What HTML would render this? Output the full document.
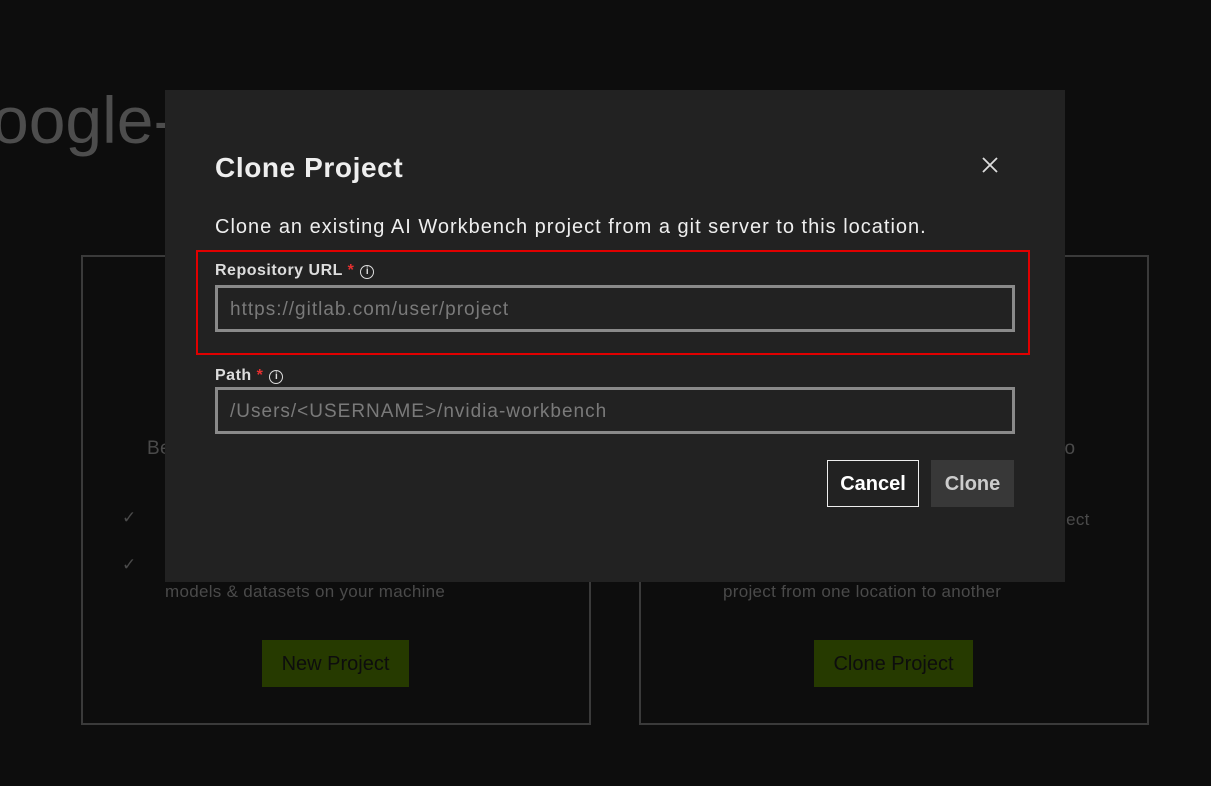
<!DOCTYPE html>
<html><head><style>
*{margin:0;padding:0;box-sizing:border-box}
body{width:1211px;height:786px;background:#0d0d0d;font-family:"Liberation Sans",sans-serif;position:relative;overflow:hidden;color:#fff}
.abs{position:absolute}
.card{position:absolute;border:2px solid #3a3a3a;top:255px;height:470px;width:510px}
.bg{color:#4a4a4a;font-size:17px;letter-spacing:0.3px}
.gbtn{position:absolute;background:#263a00;color:#0d0d0d;font-size:20px;height:47px;line-height:49px;text-align:center}
.modal{position:absolute;left:165px;top:90px;width:900px;height:492px;background:#222}
label{position:absolute;font-size:16px;font-weight:bold;color:#ddd;letter-spacing:0.5px}
.req{color:#e53030}
.inp{position:absolute;left:50px;width:800px;height:47px;border:3px solid #8a8a8a;color:#7a7a7a;font-size:19px;padding-left:12px;line-height:44px;letter-spacing:1px}
.info{display:inline-block;width:14px;height:14px;border:1.5px solid #ddd;border-radius:50%;font-size:10px;text-align:center;line-height:11px;vertical-align:1px;margin-left:6px;letter-spacing:0}
</style></head><body>
<div class="abs" style="left:-8px;top:82px;font-size:66px;color:#4d4d4d">oogle-d</div>
<div class="card" style="left:81px"></div>
<div class="card" style="left:639px"></div>
<div class="abs bg" style="left:147px;top:438px;font-size:19px">Be</div>
<div class="abs bg" style="left:1048px;top:438px;font-size:19px;z-index:0">nto</div>
<div class="abs bg" style="left:122px;top:508px">✓</div>
<div class="abs bg" style="left:122px;top:555px">✓</div>
<div class="abs bg" style="left:1062px;top:510px">ject</div>
<div class="abs bg" style="left:165px;top:582px">models &amp; datasets on your machine</div>
<div class="abs bg" style="left:723px;top:582px">project from one location to another</div>
<div class="gbtn" style="left:262px;top:640px;width:147px">New Project</div>
<div class="gbtn" style="left:814px;top:640px;width:159px">Clone Project</div>

<div class="modal">
 <div class="abs" style="left:50px;top:62px;font-size:28px;font-weight:bold;color:#eee;letter-spacing:0.6px">Clone Project</div>
 <svg class="abs" style="left:817px;top:67px" width="16" height="16"><path d="M1 1L15 15M15 1L1 15" stroke="#ddd" stroke-width="1.8"/></svg>
 <div class="abs" style="left:50px;top:126px;font-size:20px;color:#eee;letter-spacing:1px">Clone an existing AI Workbench project from a git server to this location.</div>
 <div class="abs" style="left:31px;top:160px;width:834px;height:105px;border:2px solid #e00000"></div>
 <label style="left:50px;top:172px">Repository URL <span class="req">*</span><span class="info">i</span></label>
 <div class="inp" style="top:195px">https://gitlab.com/user/project</div>
 <label style="left:50px;top:277px">Path <span class="req">*</span><span class="info">i</span></label>
 <div class="inp" style="top:297px">/Users/&lt;USERNAME&gt;/nvidia-workbench</div>
 <div class="abs" style="left:662px;top:370px;width:92px;height:47px;border:1.5px solid #eee;font-size:20px;font-weight:bold;text-align:center;line-height:46px">Cancel</div>
 <div class="abs" style="left:766px;top:370px;width:83px;height:47px;background:#383838;color:#ccc;font-size:20px;font-weight:bold;text-align:center;line-height:48px">Clone</div>
</div>
</body></html>
